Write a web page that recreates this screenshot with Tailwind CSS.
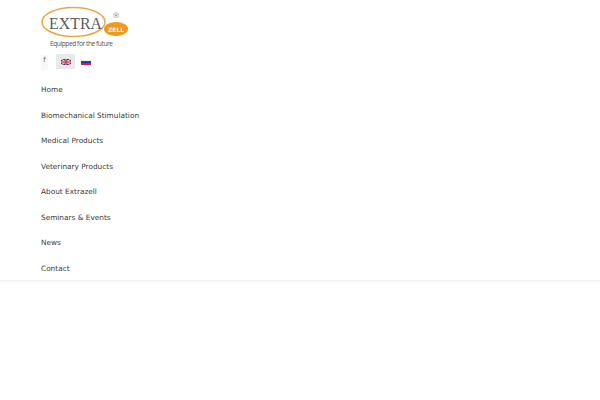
<!DOCTYPE html>
<html lang="en">
<head>
    <meta charset="UTF-8">
    <title>Extrazell</title>
    <script src="https://cdn.jsdelivr.net/npm/@tailwindcss/browser@4"></script>
</head>
<body class="bg-white font-['DejaVu_Sans',sans-serif] h-[400px] overflow-hidden">
    <header class="h-[281px] border-b border-[#f3f3f3] shadow-[0_1px_4px_rgba(0,0,0,0.04)] pl-[41px]">
        <!-- Logo -->
        <svg class="block" width="90" height="50" viewBox="0 0 90 50">
            <ellipse cx="32.5" cy="22" rx="31.5" ry="14.5" fill="none" stroke="#e9a94a" stroke-width="1.5"/>
            <text x="8" y="29" font-family="Liberation Serif" font-size="17" fill="#5c5c5c" textLength="53" lengthAdjust="spacingAndGlyphs">EXTRA</text>
            <text x="71.5" y="18" font-family="DejaVu Sans" font-size="7.5" fill="#8a8a8a">®</text>
            <ellipse cx="75" cy="29" rx="12" ry="7" fill="#ee9a1e"/>
            <text x="75" y="31.5" text-anchor="middle" font-family="DejaVu Sans" font-weight="700" font-size="6" fill="#fff">ZELL</text>
            <text x="9" y="46" font-family="Open Sans" font-size="6.6" fill="#555" textLength="63">Equipped for the future</text>
        </svg>
        <!-- Language switcher -->
        <div class="flex items-center h-[19px] mt-[2px]">
            <div class="w-[7px] h-[15px] mt-[1px] bg-[#f8f8f8] text-[7px] leading-[11px] text-center text-[#666]">f</div>
            <div class="ml-[8px] w-[19px] h-[15px] bg-[#e9e9e9] flex items-center justify-center">
                <svg width="10" height="6" viewBox="0 0 10 6">
                    <rect width="10" height="6" fill="#2b3f86"/>
                    <path d="M0 0L10 6M10 0L0 6" stroke="#e8c8c8" stroke-width="1.2"/>
                    <path d="M5 0V6M0 3H10" stroke="#f4dcdc" stroke-width="2"/>
                    <path d="M5 0V6M0 3H10" stroke="#c8102e" stroke-width="1.2"/>
                </svg>
            </div>
            <svg class="ml-[6px]" width="10" height="6" viewBox="0 0 10 6">
                <rect width="10" height="2" fill="#f4f4f4"/>
                <rect y="2" width="10" height="2" fill="#1f3fa8"/>
                <rect y="4" width="10" height="2" fill="#d4202c"/>
            </svg>
        </div>
        <!-- Menu -->
        <nav class="mt-[6.2px] flex flex-col text-[7.35px] text-[#3a3a3a]">
            <a class="h-[25.5px] leading-[25.5px]">Home</a>
            <a class="h-[25.5px] leading-[25.5px]">Biomechanical Stimulation</a>
            <a class="h-[25.5px] leading-[25.5px]">Medical Products</a>
            <a class="h-[25.5px] leading-[25.5px]">Veterinary Products</a>
            <a class="h-[25.5px] leading-[25.5px]">About Extrazell</a>
            <a class="h-[25.5px] leading-[25.5px]">Seminars &amp; Events</a>
            <a class="h-[25.5px] leading-[25.5px]">News</a>
            <a class="h-[25.5px] leading-[25.5px]">Contact</a>
        </nav>
    </header>
</body>
</html>
